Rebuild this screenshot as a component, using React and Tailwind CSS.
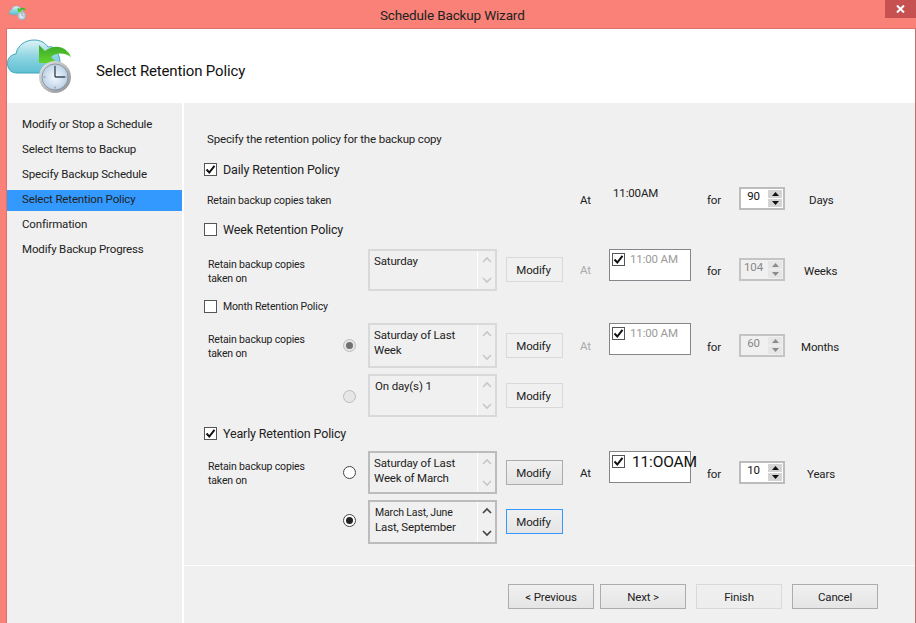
import React from 'react';

const font = "font-['Roboto',sans-serif] tracking-[-0.15px]";

// cloud + green arrow + clock, used big in the header and small in the title bar
const WizardIcon = ({ className }) => (
  <svg viewBox="0 0 66 60" className={className}>
    <defs>
      <linearGradient id="cloudFill" x1="0" y1="0" x2="0" y2="1">
        <stop offset="0" stopColor="#dff3f7" />
        <stop offset="0.5" stopColor="#8fd5e2" />
        <stop offset="1" stopColor="#5fbfd2" />
      </linearGradient>
      <linearGradient id="arrowFill" x1="0" y1="0" x2="0" y2="1">
        <stop offset="0" stopColor="#3aa828" />
        <stop offset="1" stopColor="#62d32c" />
      </linearGradient>
      <linearGradient id="clockRim" x1="0" y1="0" x2="1" y2="1">
        <stop offset="0" stopColor="#e8e8e8" />
        <stop offset="1" stopColor="#8b8f93" />
      </linearGradient>
      <radialGradient id="clockFace">
        <stop offset="0" stopColor="#f5f9fd" />
        <stop offset="1" stopColor="#bcd2e8" />
      </radialGradient>
    </defs>
    <path
      d="M10 37C3 37 .5 32 .5 27.5C.5 22 4 18.5 9 18C10 10 18 4 27 4C33 4 38 6.500 41 11C45 10 48 12 49 15C52 18 54 24 53 37Z"
      fill="url(#cloudFill)"
      stroke="#3fa6bc"
      strokeWidth="1"
    />
    <path d="M32 9L32 27L50 27L44 21C48 17 56 16 64 21C61 13 50 6 38 15Z" fill="url(#arrowFill)" />
    <circle cx="48" cy="41" r="16" fill="url(#clockRim)" />
    <circle cx="48" cy="41" r="13" fill="url(#clockFace)" stroke="#6f7478" strokeWidth="0.6" />
    <path d="M48 41V30M48 41H58" stroke="#3c4a5c" strokeWidth="1.4" fill="none" />
    <path d="M48 29.500V31.500M48 50.500V52.500M36.500 41H38.500M57.500 41H59.500" stroke="#7c8894" strokeWidth="1" />
  </svg>
);

const Checkbox = ({ checked }) => (
  <span className="w-[13px] h-[13px] shrink-0 border border-[#555] bg-white flex items-center justify-center">
    {checked && (
      <svg viewBox="0 0 11 11" className="w-[11px] h-[11px]">
        <path d="M1.500 5.500L4.300 8.500L9.500 1.800" fill="none" stroke="#111" strokeWidth="2" />
      </svg>
    )}
  </span>
);

const PolicyCheck = ({ label, checked, small, rowClass }) => (
  <div className={`flex items-center ${rowClass}`}>
    <Checkbox checked={checked} />
    <span className={`ml-[6px] mt-[2px] text-[#222] ${small ? 'text-[10.5px]' : 'text-[12.5px]'}`}>{label}</span>
  </div>
);

const Radio = ({ selected, disabled, className }) => (
  <span
    className={`ml-[1px] w-[13px] h-[13px] rounded-full border flex items-center justify-center ${className} ${
      disabled ? 'border-[#bcbcbc] bg-[#e6e6e6]' : 'border-[#444] bg-white'
    }`}
  >
    {selected && <span className={`w-[7px] h-[7px] rounded-full ${disabled ? 'bg-[#707070]' : 'bg-[#222]'}`} />}
  </span>
);

const Chevron = ({ up, color }) => (
  <svg viewBox="0 0 10 7" className="w-[10px] h-[7px]">
    <path d={up ? 'M1 6L5 2L9 6' : 'M1 1L5 5L9 1'} fill="none" stroke={color} strokeWidth="1.700" />
  </svg>
);

const ListBox = ({ lines, height, enabled, active, small, indent }) => (
  <div
    className={`w-[129px] border-2 flex ${enabled ? 'border-[#bcbcbc]' : 'border-[#d9d9d9]'}`}
    style={{ height }}
  >
    <div className={`w-[108px] border-r border-white pt-[3px] text-[11.5px] leading-[15px] ${indent ? 'pl-[5px]' : 'pl-[4px]'} text-[#222]`}>
      {lines.map((line, i) => (
        <div key={line} className={small && i === 0 ? 'text-[10.5px]' : ''}>{line}</div>
      ))}
    </div>
    <div className="flex-1 flex flex-col items-center justify-between py-[5px]">
      <Chevron up color={active ? '#444' : '#c8c8c8'} />
      <Chevron color={active ? '#444' : '#c8c8c8'} />
    </div>
  </div>
);

const ModifyButton = ({ top, enabled, focused }) => {
  const border = focused ? 'border-[#3399ff]' : enabled ? 'border-[#acacac]' : 'border-[#d9d9d9]';
  return (
    <div
      className={`w-[57px] h-[25px] border pt-[2px] pr-[2px] ${border} flex items-center justify-center text-[11.5px] text-[#222] ${
        enabled ? 'bg-gradient-to-b from-[#f0f0f0] to-[#e5e5e5]' : 'bg-[#f0f0f0]'
      }`}
      style={{ marginTop: top }}
    >
      Modify
    </div>
  );
};

const TimeBox = ({ text, big }) => (
  <div className="w-[82px] h-[32px] border border-[#83878c] bg-white flex items-start pl-[2px] pt-[3px]">
    <Checkbox checked />
    {big ? (
      <span className="ml-[7px] -mt-[1px] text-[15.5px] leading-[17px] text-[#111] whitespace-nowrap">{text}</span>
    ) : (
      <span className="ml-[5px] -mt-[1px] text-[11.5px] leading-[14px] text-[#9a9a9a] whitespace-nowrap">{text}</span>
    )}
  </div>
);

const Spinner = ({ value, top, disabled }) => (
  <div
    className={`w-[46px] h-[23px] border-2 flex ${disabled ? 'border-[#c4c4c4] bg-[#f0f0f0]' : 'border-[#bcbcbc] bg-white'}`}
    style={{ marginTop: top }}
  >
    <span className={`flex-1 text-center pr-[2px] text-[11.5px] leading-[15px] ${disabled ? 'text-[#888]' : 'text-[#111]'}`}>{value}</span>
    <span className="w-[14px] mr-[1px] flex flex-col gap-[1px] py-[1px]">
      {[true, false].map((up) => (
        <span key={String(up)} className={`flex-1 flex items-center justify-center ${disabled ? 'bg-[#e6e6e6]' : 'bg-[#d4d4d4]'}`}>
          <svg viewBox="0 0 7 4" className="w-[7px] h-[4px]">
            <path d={up ? 'M3.500 0L7 4H0Z' : 'M0 0H7L3.500 4Z'} fill={disabled ? '#8c8c8c' : '#111'} />
          </svg>
        </span>
      ))}
    </span>
  </div>
);

// label | radio | list | modify | At | time | for | spinner | unit
const Row = ({ height, children }) => (
  <div className="grid grid-cols-[138px_26px_138px_74px_29px_98px_32px_46px_auto] text-[11.5px] text-[#222]" style={{ height }}>
    {children}
  </div>
);

const TakenOn = ({ top }) => (
  <div className="pl-[4px] text-[10.5px] leading-[14px] text-[#222]" style={{ marginTop: top }}>
    <div>Retain backup copies</div>
    <div>taken on</div>
  </div>
);

const Trailing = ({ time, timeBig, value, spinTop, textTop, unit, unitGap, disabled }) => (
  <>
    <div className={disabled ? 'text-[#aaa]' : ''} style={{ marginTop: textTop }}>At</div>
    <div><TimeBox text={time} big={timeBig} /></div>
    <div style={{ marginTop: textTop + 1 }}>for</div>
    <Spinner value={value} top={spinTop} disabled={disabled} />
    <div style={{ marginTop: textTop + 1, marginLeft: unitGap }}>{unit}</div>
  </>
);

const steps = ['Modify or Stop a Schedule', 'Select Items to Backup', 'Specify Backup Schedule', 'Select Retention Policy', 'Confirmation', 'Modify Backup Progress'];

const FooterButton = ({ label, disabled, className = '' }) => (
  <div
    className={`w-[86px] h-[25px] border pt-[2px] flex items-center justify-center text-[11.5px] text-[#222] bg-gradient-to-b ${className} ${
      disabled ? 'border-[#d9d9d9] from-[#f0f0f0] to-[#ededed]' : 'border-[#acacac] from-[#f0f0f0] to-[#e5e5e5]'
    }`}
  >
    {label}
  </div>
);

const App = () => {
  return (
    <div className={`w-[916px] h-[623px] overflow-hidden flex flex-col bg-[#f98177] ${font}`}>
      {/* Title bar */}
      <div className="h-[28px] shrink-0 flex items-start">
        <WizardIcon className="ml-[9px] mt-[5px] w-[18px] h-[16px]" />
        <div className="ml-[353px] mt-[6px] text-[13.5px] leading-[18px] text-[#222] whitespace-nowrap">Schedule Backup Wizard</div>
        <div className="ml-auto w-[31px] h-[18px] bg-[#c75050] flex items-center justify-center">
          <svg viewBox="0 0 9 8" className="w-[9px] h-[8px]">
            <path d="M1 .500L8 7.500M8 .500L1 7.500" stroke="#fff" strokeWidth="2" />
          </svg>
        </div>
      </div>

      <div className="flex-1 ml-[6px] border-l border-t border-r border-l-[#dc7269] border-t-[#dc7269] border-r-[#c96f68] flex flex-col bg-white min-h-0">
        {/* Header */}
        <div className="h-[74px] shrink-0 flex items-start">
          <WizardIcon className="mt-[7px] w-[66px] h-[60px]" />
          <div className="ml-[23px] mt-[32px] text-[15px] leading-[20px] text-[#111]">Select Retention Policy</div>
        </div>

        <div className="flex-1 flex min-h-0">
          {/* Steps */}
          <div className="w-[175px] shrink-0 bg-[#f0f0f0] pt-[12px] text-[11.5px] text-[#222]">
            {steps.map((step) => (
              <div
                key={step}
                className={`h-[21px] mb-[4px] pl-[15px] leading-[19px] ${step === 'Select Retention Policy' ? 'bg-[#3399ff]' : ''}`}
              >
                {step}
              </div>
            ))}
          </div>

          {/* Main panel */}
          <div className="flex-1 ml-[2px] bg-[#f0f0f0] flex flex-col">
            <div className="pl-[20px] flex-1">
              <div className="pl-[3px] pt-[28px] h-[57px] text-[11.5px] leading-[17px] text-[#222]">Specify the retention policy for the backup copy</div>
              <PolicyCheck label="Daily Retention Policy" checked rowClass="h-[29px] -mt-[2px] pb-[7px]" />

              <Row height={33}>
                <div className="col-span-4 pl-[3px] mt-[7px] text-[10.5px] leading-[14px]">Retain backup copies taken</div>
                <div className="mt-[5px]">At</div>
                <div className="-mt-[2px] pl-[4px]">11:00AM</div>
                <div className="mt-[5px]">for</div>
                <Spinner value="90" top={0} />
                <div className="mt-[5px] ml-[24px]">Days</div>
              </Row>

              <PolicyCheck label="Week Retention Policy" rowClass="h-[18px] mb-[11px]" />

              <Row height={48}>
                <TakenOn top={9} />
                <div />
                <ListBox lines={['Saturday']} height={42} />
                <ModifyButton top={8} />
                <Trailing time="11:00 AM" value="104" spinTop={9} textTop={13} unit="Weeks" unitGap={19} disabled />
              </Row>

              <PolicyCheck label="Month Retention Policy" small rowClass="h-[18px] mb-[8px]" />

              <Row height={51}>
                <TakenOn top={10} />
                <Radio selected disabled className="mt-[16px]" />
                <ListBox lines={['Saturday of Last', 'Week']} height={45} />
                <ModifyButton top={10} />
                <Trailing time="11:00 AM" value="60" spinTop={11} textTop={15} unit="Months" unitGap={16} disabled />
              </Row>

              <Row height={50}>
                <div />
                <Radio disabled className="mt-[16px]" />
                <ListBox lines={['On day(s) 1']} height={43} indent />
                <ModifyButton top={9} />
              </Row>

              <PolicyCheck label="Yearly Retention Policy" checked rowClass="h-[18px] mb-[9px]" />

              <Row height={49}>
                <TakenOn top={9} />
                <Radio className="mt-[15px]" />
                <ListBox lines={['Saturday of Last', 'Week of March']} height={43} enabled />
                <ModifyButton top={9} enabled />
                <Trailing time="11:OOAM" timeBig value="10" spinTop={10} textTop={14} unit="Years" unitGap={22} />
              </Row>

              <Row height={48}>
                <div />
                <Radio selected className="mt-[14px]" />
                <ListBox lines={['March Last, June', 'Last, September']} height={44} enabled active small indent />
                <ModifyButton top={9} enabled focused />
              </Row>
            </div>

            {/* Footer */}
            <div className="h-[58px] shrink-0 border-t border-white flex justify-end pt-[18px] pr-[37px]">
              <FooterButton label="< Previous" />
              <FooterButton label="Next >" className="ml-[6px]" />
              <FooterButton label="Finish" disabled className="ml-[10px]" />
              <FooterButton label="Cancel" className="ml-[10px]" />
            </div>
          </div>
        </div>
      </div>
    </div>
  );
};

export default App;
